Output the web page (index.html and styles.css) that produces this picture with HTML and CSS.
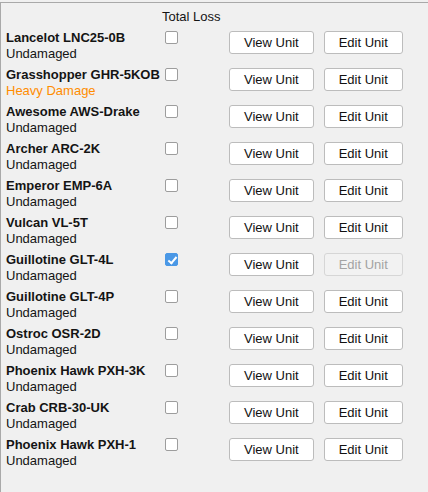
FILE: index.html
```html
<!DOCTYPE html>
<html>
<head>
<meta charset="utf-8">
<link rel="stylesheet" href="styles.css">
</head>
<body>
<div class="panel">
  <div class="grid">
    <div class="head-spacer"></div>
    <div class="head">Total Loss</div>
    <div class="head-spacer"></div>

    <div class="name"><b>Lancelot LNC25-0B</b><span class="st">Undamaged</span></div>
    <div class="chk"><input type="checkbox"></div>
    <div class="btns"><button>View Unit</button><button>Edit Unit</button></div>

    <div class="name"><b>Grasshopper GHR-5KOB</b><span class="st heavy">Heavy Damage</span></div>
    <div class="chk"><input type="checkbox"></div>
    <div class="btns"><button>View Unit</button><button>Edit Unit</button></div>

    <div class="name"><b>Awesome AWS-Drake</b><span class="st">Undamaged</span></div>
    <div class="chk"><input type="checkbox"></div>
    <div class="btns"><button>View Unit</button><button>Edit Unit</button></div>

    <div class="name"><b>Archer ARC-2K</b><span class="st">Undamaged</span></div>
    <div class="chk"><input type="checkbox"></div>
    <div class="btns"><button>View Unit</button><button>Edit Unit</button></div>

    <div class="name"><b>Emperor EMP-6A</b><span class="st">Undamaged</span></div>
    <div class="chk"><input type="checkbox"></div>
    <div class="btns"><button>View Unit</button><button>Edit Unit</button></div>

    <div class="name"><b>Vulcan VL-5T</b><span class="st">Undamaged</span></div>
    <div class="chk"><input type="checkbox"></div>
    <div class="btns"><button>View Unit</button><button>Edit Unit</button></div>

    <div class="name"><b>Guillotine GLT-4L</b><span class="st">Undamaged</span></div>
    <div class="chk"><input type="checkbox" checked></div>
    <div class="btns"><button>View Unit</button><button disabled>Edit Unit</button></div>

    <div class="name"><b>Guillotine GLT-4P</b><span class="st">Undamaged</span></div>
    <div class="chk"><input type="checkbox"></div>
    <div class="btns"><button>View Unit</button><button>Edit Unit</button></div>

    <div class="name"><b>Ostroc OSR-2D</b><span class="st">Undamaged</span></div>
    <div class="chk"><input type="checkbox"></div>
    <div class="btns"><button>View Unit</button><button>Edit Unit</button></div>

    <div class="name"><b>Phoenix Hawk PXH-3K</b><span class="st">Undamaged</span></div>
    <div class="chk"><input type="checkbox"></div>
    <div class="btns"><button>View Unit</button><button>Edit Unit</button></div>

    <div class="name"><b>Crab CRB-30-UK</b><span class="st">Undamaged</span></div>
    <div class="chk"><input type="checkbox"></div>
    <div class="btns"><button>View Unit</button><button>Edit Unit</button></div>

    <div class="name"><b>Phoenix Hawk PXH-1</b><span class="st">Undamaged</span></div>
    <div class="chk"><input type="checkbox"></div>
    <div class="btns"><button>View Unit</button><button>Edit Unit</button></div>
  </div>
</div>
</body>
</html>
```

FILE: styles.css
```css
html, body {
  margin: 0;
  padding: 0;
  background: #f0f0f0;
}
body {
  font-family: "Liberation Sans", Arial, sans-serif;
  font-size: 13px;
  color: #141414;
  height: 492px;
  box-sizing: border-box;
  padding-top: 2px;
}
.panel {
  height: 100%;
  border-top: 1px solid #a9a9a9;
  border-left: 1px solid #a9a9a9;
  padding: 6px 0 0 5px;
  box-sizing: border-box;
}
.grid {
  display: grid;
  grid-template-columns: 156px 67px auto;
  grid-auto-rows: 32px;
  grid-template-rows: 16px;
  row-gap: 5px;
  line-height: 16px;
}
.grid > :nth-child(-n+3) {
  margin-bottom: 1px;
}
.name {
  display: flex;
  flex-direction: column;
  white-space: nowrap;
}
.name b {
  font-weight: bold;
}
.st.heavy {
  color: #ff8c00;
}
.chk {
  padding-top: 1px;
}
.chk input {
  appearance: none;
  -webkit-appearance: none;
  display: block;
  margin: 0 0 0 3px;
  width: 13px;
  height: 13px;
  box-sizing: border-box;
  border: 1px solid #9d9d9d;
  border-radius: 2px;
  background: #fff;
  position: relative;
}
.chk input:checked {
  background: #4a98e6;
  border-color: #4a98e6;
}
.chk input:checked::after {
  content: "";
  position: absolute;
  left: 3.5px;
  top: 0.5px;
  width: 3px;
  height: 7px;
  border-right: 2px solid #fff;
  border-bottom: 2px solid #fff;
  transform: rotate(40deg);
}
.btns {
  display: flex;
  gap: 10px;
  align-items: flex-start;
  padding-top: 1px;
}
button {
  font-family: "Liberation Sans", Arial, sans-serif;
  font-size: 13px;
  color: #111;
  background: #fff;
  border: 1px solid #bcbcbc;
  border-radius: 3px;
  height: 23px;
  padding: 0 14px;
  margin: 0;
  line-height: 21px;
}
button:disabled {
  background: #f2f2f2;
  border-color: #d6d6d6;
  color: #a3a3a3;
}
```
